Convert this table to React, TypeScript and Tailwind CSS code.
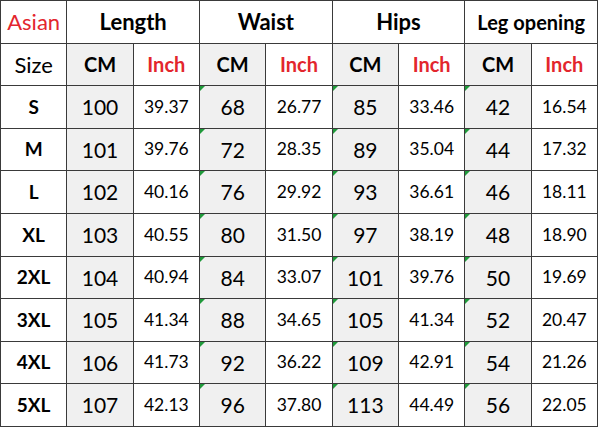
import React from "react";

const rows = [
  ["S", "100", "39.37", "68", "26.77", "85", "33.46", "42", "16.54"],
  ["M", "101", "39.76", "72", "28.35", "89", "35.04", "44", "17.32"],
  ["L", "102", "40.16", "76", "29.92", "93", "36.61", "46", "18.11"],
  ["XL", "103", "40.55", "80", "31.50", "97", "38.19", "48", "18.90"],
  ["2XL", "104", "40.94", "84", "33.07", "101", "39.76", "50", "19.69"],
  ["3XL", "105", "41.34", "88", "34.65", "105", "41.34", "52", "20.47"],
  ["4XL", "106", "41.73", "92", "36.22", "109", "42.91", "54", "21.26"],
  ["5XL", "107", "42.13", "96", "37.80", "113", "44.49", "56", "22.05"],
];

const cell = "flex items-center justify-center border-r border-b border-[#3a3a3a]";

function Flag() {
  return (
    <span className="absolute left-0 top-0 w-0 h-0 border-t-[5px] border-r-[5px] border-t-[#1f9a3a] border-r-transparent" />
  );
}

export default function App() {
  return (
    <div className="w-[600px] h-[427px] bg-white" style={{ fontFamily: "Lato, 'Open Sans', sans-serif" }}>
      <div className="grid grid-cols-9 grid-rows-10 w-[598px] h-[427px] border-l border-t border-[#3a3a3a] text-black">
        <div className={`${cell} text-[22px] text-[#e3262d]`}>Asian</div>
        <div className={`${cell} col-span-2 text-[22px] font-bold`}>Length</div>
        <div className={`${cell} col-span-2 text-[22px] font-bold`}>Waist</div>
        <div className={`${cell} col-span-2 text-[22px] font-bold`}>Hips</div>
        <div className={`${cell} col-span-2 text-[20px] font-bold`}>Leg opening</div>

        <div className={`${cell} text-[22px]`}>Size</div>
        {[0, 1, 2, 3].map((i) => (
          <React.Fragment key={i}>
            <div className={`${cell} bg-[#f0f0f0] text-[20px] font-bold`}>CM</div>
            <div className={`${cell} text-[20px] font-bold text-[#e3262d]`}>Inch</div>
          </React.Fragment>
        ))}

        {rows.map((r) => (
          <React.Fragment key={r[0]}>
            <div className={`${cell} text-[19px] font-bold`}>{r[0]}</div>
            {r.slice(1).map((v, j) => {
              const isCm = j % 2 === 0;
              return (
                <div
                  key={j}
                  className={`${cell} relative ${isCm ? "bg-[#f0f0f0] text-[21px]" : "text-[17.5px]"}`}
                >
                  {isCm && j > 0 && <Flag />}
                  {v}
                </div>
              );
            })}
          </React.Fragment>
        ))}
      </div>
    </div>
  );
}
